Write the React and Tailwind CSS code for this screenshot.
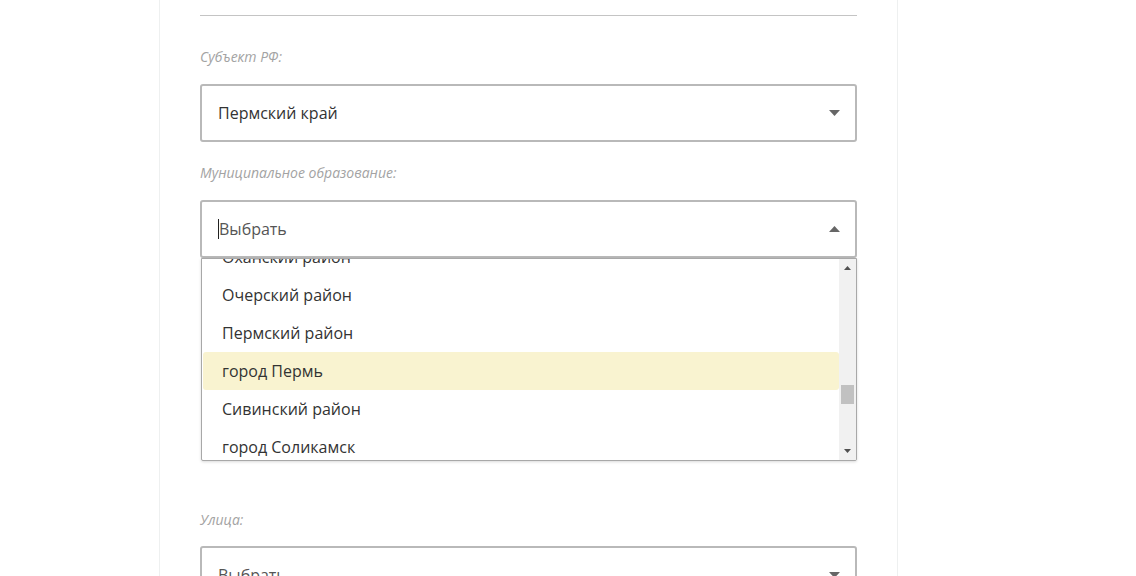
import React from "react";

const FONT = { fontFamily: '"Open Sans", "Liberation Sans", sans-serif' };

const municipalities = [
    "Оханский район",
    "Очерский район",
    "Пермский район",
    "город Пермь",
    "Сивинский район",
    "город Соликамск",
];

function Caret({ up = false }) {
    return (
        <svg width="11" height="6" viewBox="0 0 11 6" className="shrink-0">
            {up ? (
                <polygon points="0,6 11,6 5.5,0" fill="#666" />
            ) : (
                <polygon points="0,0 11,0 5.5,6" fill="#666" />
            )}
        </svg>
    );
}

function Label({ children, className = "" }) {
    return (
        <div
            className={`text-[14px] leading-[18px] italic text-[#a3a3a3] ${className}`}
        >
            {children}
        </div>
    );
}

function SelectBox({ value, placeholder, open = false, cursor = false }) {
    return (
        <div className="h-[58px] border-2 border-[#b9b9b9] rounded-[3px] bg-white flex items-center pl-4 pr-[15px]">
            <div className="flex-1 flex items-center text-[16px]">
                {cursor && <span className="w-px h-[20px] bg-[#222]" />}
                {value ? (
                    <span className="text-[#333]">{value}</span>
                ) : (
                    <span className="text-[#555]">{placeholder}</span>
                )}
            </div>
            <Caret up={open} />
        </div>
    );
}

function ScrollArrow({ up = false }) {
    return (
        <svg width="7" height="4" viewBox="0 0 7 4">
            {up ? (
                <polygon points="0,4 7,4 3.5,0" fill="#505050" />
            ) : (
                <polygon points="0,0 7,0 3.5,4" fill="#505050" />
            )}
        </svg>
    );
}

function Dropdown() {
    return (
        <div className="absolute left-px right-0 top-full h-[203px] bg-white border border-[#a8a8a8] rounded-b-[2px] shadow-[0_1px_3px_rgba(0,0,0,0.15)] flex overflow-hidden z-10">
            <div className="flex-1 overflow-hidden pl-px">
                <div className="-mt-[21px]">
                    {municipalities.map((name) => (
                        <div
                            key={name}
                            className={`h-[38px] flex items-center pl-[19px] text-[16px] text-[#333] rounded-[3px] ${
                                name === "город Пермь" ? "bg-[#f9f3d0]" : ""
                            }`}
                        >
                            {name}
                        </div>
                    ))}
                </div>
            </div>
            <div className="w-[17px] bg-[#f1f1f1] flex flex-col items-center">
                <div className="h-[18px] flex items-center justify-center">
                    <ScrollArrow up />
                </div>
                <div className="flex-1 w-full px-[2px]">
                    <div className="mt-[108px] h-[19px] bg-[#c1c1c1]" />
                </div>
                <div className="h-[18px] flex items-center justify-center">
                    <ScrollArrow />
                </div>
            </div>
        </div>
    );
}

export default function App() {
    return (
        <div className="h-[576px] overflow-hidden bg-white" style={FONT}>
            <div className="ml-[159px] w-[739px] min-h-[576px] border-x border-[#eef0f0] px-10">
                <div className="h-[16px] border-b border-[#c4c4c4]" />

                <Label className="mt-[32px]">Субъект РФ:</Label>
                <div className="mt-[18px]">
                    <SelectBox value="Пермский край" />
                </div>

                <Label className="mt-[22px]">Муниципальное образование:</Label>
                <div className="mt-[18px] relative">
                    <SelectBox placeholder="Выбрать" open cursor />
                    <Dropdown />
                </div>

                <Label className="mt-[253px]">Улица:</Label>
                <div className="mt-[17px]">
                    <SelectBox placeholder="Выбрать" />
                </div>
            </div>
        </div>
    );
}
